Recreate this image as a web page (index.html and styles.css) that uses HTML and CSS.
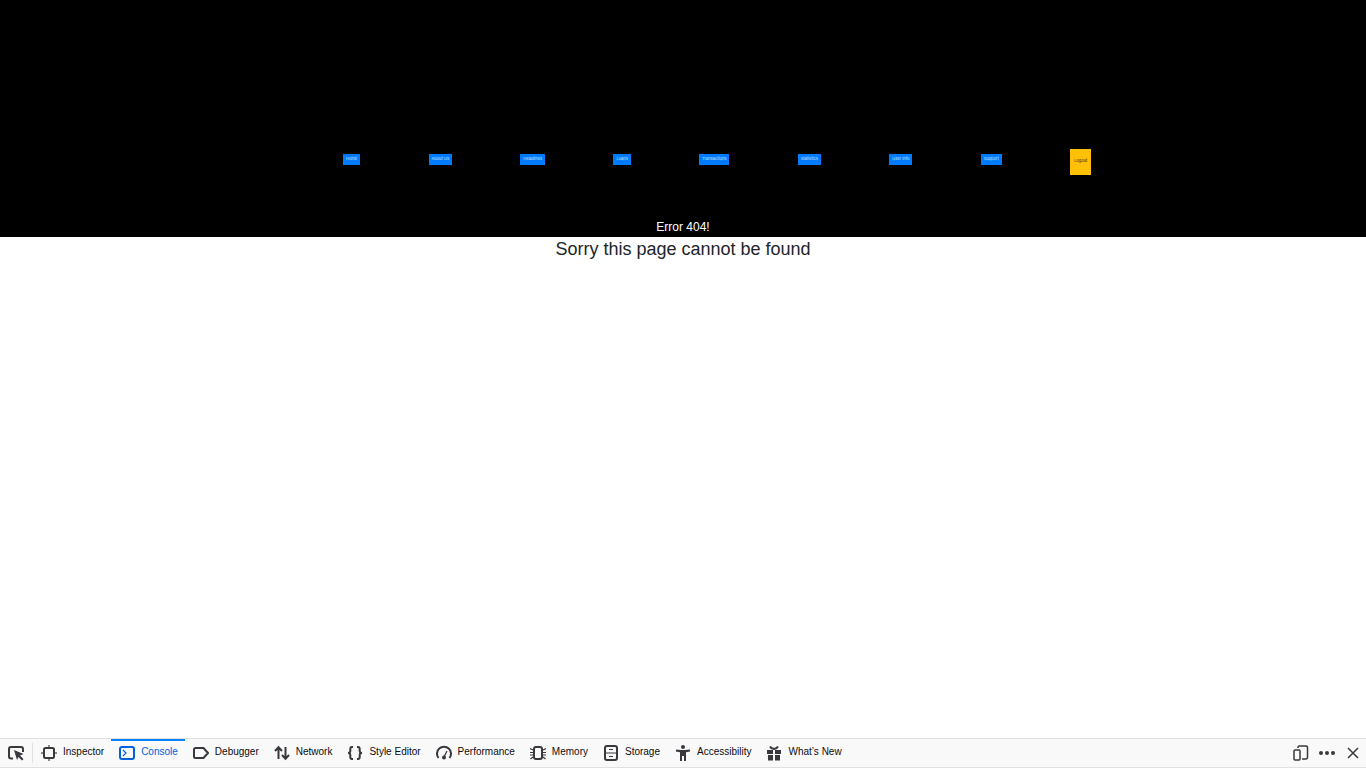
FILE: index.html
```
<!DOCTYPE html>
<html lang="en">
<head>
<meta charset="utf-8">
<title>Error 404!</title>
<link rel="stylesheet" href="styles.css">
</head>
<body>
<header class="hero">
  <nav class="menu" aria-label="Main">
    <a class="btn" href="#">Home</a>
    <a class="btn" href="#">About Us</a>
    <a class="btn" href="#">Headlines</a>
    <a class="btn" href="#">Loans</a>
    <a class="btn" href="#">Transactions</a>
    <a class="btn" href="#">Statistics</a>
    <a class="btn" href="#">User Info</a>
    <a class="btn" href="#">Support</a>
    <button class="btn logout" type="button">Logout</button>
  </nav>
  <h1 class="title">Error 404!</h1>
</header>
<main class="content">
  <p class="message">Sorry this page cannot be found</p>
</main>
<footer class="toolbox">
  <button class="tool pick" type="button" aria-label="Pick an element">
    <svg class="icon" viewBox="0 0 16 16"><path class="line" d="M5 13.5H3A2 2 0 0 1 1 11.5V4A2 2 0 0 1 3 2H13A2 2 0 0 1 15 4V7"/><path class="solid" d="M6 5L15.5 9L12 10.5L15.5 14L14 15.5L10.5 12L9 15Z"/></svg>
  </button>
  <div class="tabs">
    <button class="tool" type="button"><svg class="icon" viewBox="0 0 16 16"><rect class="line" x="3" y="3" width="10" height="10" rx="1.5"/><path class="faint" d="M8 0V2M8 14V16M0 8H2M14 8H16"/></svg><span class="label">Inspector</span></button>
    <button class="tool active" type="button"><svg class="icon" viewBox="0 0 16 16"><rect class="line" x="1" y="2" width="14" height="12" rx="2"/><path class="thin" d="M4 5L7 8L4 11"/></svg><span class="label">Console</span></button>
    <button class="tool" type="button"><svg class="icon" viewBox="0 0 16 16"><path class="line" d="M2.5 3H10.5L15 8L10.5 13H2.5A1.5 1.5 0 0 1 1 11.5V4.5A1.5 1.5 0 0 1 2.5 3Z"/></svg><span class="label">Debugger</span></button>
    <button class="tool" type="button"><svg class="icon" viewBox="0 0 16 16"><path class="line" d="M4.500 14V3M1 6L4.500 2.300L8 6M11.500 2V13M8 10L11.500 13.700L15 10"/></svg><span class="label">Network</span></button>
    <button class="tool" type="button"><svg class="icon" viewBox="0 0 16 16"><path class="line" d="M6 2H5Q3.300 2 3.300 4V6Q3.300 8 1 8Q3.300 8 3.300 10V12Q3.300 14 5 14H6M10 2H11Q12.700 2 12.700 4V6Q12.700 8 15 8Q12.700 8 12.700 10V12Q12.700 14 11 14H10"/></svg><span class="label">Style Editor</span></button>
    <button class="tool" type="button"><svg class="icon" viewBox="0 0 16 16"><path class="line" d="M2.500 13A7 7 0 1 1 13.500 13"/><path class="thin" d="M8 12L11 6"/><circle class="solid" cx="8" cy="12.500" r="2"/></svg><span class="label">Performance</span></button>
    <button class="tool" type="button"><svg class="icon" viewBox="0 0 16 16"><rect class="line" x="4" y="2" width="8" height="12" rx="2"/><path class="thin" d="M3 5L0 3.500M3 7.500H0M3 10H0M3 12L0.500 14M13 5L16 3.500M13 7.500H16M13 10H16M13 12L15.500 14"/></svg><span class="label">Memory</span></button>
    <button class="tool" type="button"><svg class="icon" viewBox="0 0 16 16"><rect class="line" x="2" y="1" width="12" height="14" rx="2"/><path class="thin" d="M3 8H13M6 4.500H10M6 11.500H10"/></svg><span class="label">Storage</span></button>
    <button class="tool" type="button"><svg class="icon" viewBox="0 0 16 16"><circle class="solid" cx="8" cy="2" r="2"/><path class="solid" d="M1 4.500L6 5H10L15 4.500V6.500L11 7.200V16H9V11H7V16H5V7.200L1 6.500Z"/></svg><span class="label">Accessibility</span></button>
    <button class="tool" type="button"><svg class="icon" viewBox="0 0 16 16"><path class="solid" d="M1 5H7V9H1ZM9 5H15V9H9ZM2 10H7V15.500H2ZM9 10H14V15.500H9Z"/><path class="line" d="M4 1.500Q5 3.500 8 4Q11 3.500 12 1.500"/></svg><span class="label">What’s New</span></button>
  </div>
  <div class="actions">
    <button class="tool end" type="button" aria-label="Responsive design mode"><svg class="icon" viewBox="0 0 16 16"><path class="mid" d="M5 3V2A1.200 1.200 0 0 1 6.200 1H13A1.500 1.500 0 0 1 14.500 2.500V12.500A1.500 1.500 0 0 1 13 14H9"/><rect class="mid" x="1" y="5" width="6" height="10" rx="1"/></svg></button>
    <button class="tool end" type="button" aria-label="More"><svg class="icon" viewBox="0 0 16 16"><circle class="solid" cx="2" cy="8" r="2"/><circle class="solid" cx="8" cy="8" r="2"/><circle class="solid" cx="14" cy="8" r="2"/></svg></button>
    <button class="tool end" type="button" aria-label="Close"><svg class="icon" viewBox="0 0 16 16"><path class="mid" d="M3 3L13 13M13 3L3 13"/></svg></button>
  </div>
</footer>
</body>
</html>
```
FILE: styles.css
```
* {
  box-sizing: border-box;
}

body {
  margin: 0;
  min-height: 100vh;
  display: flex;
  flex-direction: column;
  background: #fff;
  color: #212529;
  font-family: "Liberation Sans", sans-serif;
}

.hero {
  padding-top: 149px;
  background: #000;
  color: #fff;
  text-align: center;
}

.menu {
  display: flex;
  justify-content: center;
  align-items: flex-start;
  gap: 5vw;
  padding-left: 5vw;
}

.btn {
  margin-top: 5px;
  padding: 2px 3px 3px;
  border: 0;
  background: #007bff;
  color: #cce5ff;
  font-family: Inter, "Liberation Sans", sans-serif;
  font-size: 4px;
  line-height: 6px;
  text-decoration: none;
  white-space: nowrap;
}

.logout {
  margin-top: 0;
  padding: 9px 4px 11px;
  background: #ffc107;
  color: #212529;
}

.title {
  margin: 0;
  padding-top: 42px;
  font-size: 12px;
  font-weight: 400;
  line-height: 20px;
}

.content {
  flex: 1;
  text-align: center;
}

.message {
  margin: 0;
  font-size: 18px;
  line-height: 24px;
}

.toolbox {
  display: flex;
  height: 30px;
  border-top: 1px solid #e0e0e2;
  border-bottom: 1px solid #e0e0e2;
  background: #f9f9fa;
}

.tabs {
  display: flex;
  flex: 1;
}

.tool {
  display: flex;
  align-items: center;
  gap: 6px;
  padding: 0 7px 0 8px;
  border: 0;
  background: none;
  color: #0c0c0d;
  font: 10px/16px "Liberation Sans Narrow", "Liberation Sans", sans-serif;
  white-space: nowrap;
}

.label {
  padding-bottom: 2px;
}

.pick {
  position: relative;
  padding-right: 9px;
}

.pick::after {
  content: "";
  position: absolute;
  top: 4px;
  right: 0;
  bottom: 4px;
  width: 1px;
  background: #e0e0e2;
}

.active {
  box-shadow: inset 0 2px #0a84ff;
  color: #0060df;
}

.actions {
  display: flex;
}

.end {
  padding: 0 5px;
}

.icon {
  width: 16px;
  height: 16px;
  fill: none;
  stroke: #38383d;
}

.active .icon {
  stroke: #0060df;
}

.line {
  stroke-width: 2;
}

.mid {
  stroke-width: 1.5;
}

.thin {
  stroke-width: 1.2;
}

.faint {
  stroke: #8b8b8e;
  stroke-width: 2;
}

.solid {
  fill: #38383d;
  stroke: none;
}
```
